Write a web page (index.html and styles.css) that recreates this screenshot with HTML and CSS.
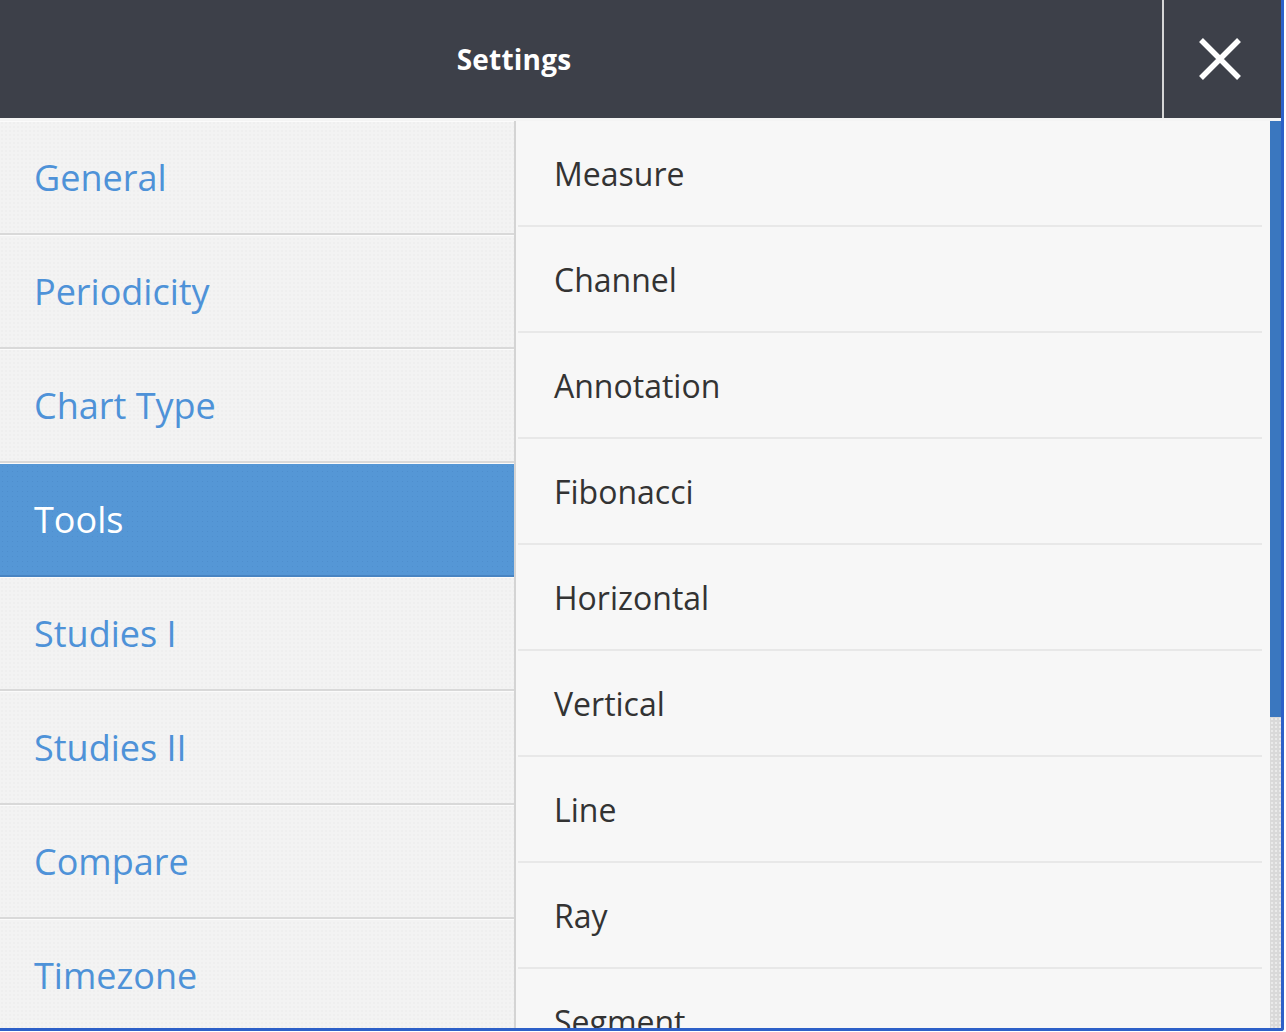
FILE: index.html
```html
<!DOCTYPE html>
<html lang="en">
<head>
<meta charset="utf-8">
<title>Settings</title>
<link rel="stylesheet" href="styles.css">
</head>
<body>
<div class="frame">
  <header class="header">
    <div class="title">Settings</div>
    <button class="close" aria-label="Close">
      <svg width="44" height="44" viewBox="0 0 44 44" aria-hidden="true">
        <path d="M3 3 L41 41 M41 3 L3 41" stroke="#fff" stroke-width="5.5" fill="none"/>
      </svg>
    </button>
  </header>
  <div class="body">
    <nav class="menu">
      <div class="menu-item">General</div>
      <div class="menu-item">Periodicity</div>
      <div class="menu-item">Chart Type</div>
      <div class="menu-item active">Tools</div>
      <div class="menu-item">Studies I</div>
      <div class="menu-item">Studies II</div>
      <div class="menu-item">Compare</div>
      <div class="menu-item">Timezone</div>
    </nav>
    <div class="pane">
      <div class="list">
        <div class="list-item">Measure</div>
        <div class="list-item">Channel</div>
        <div class="list-item">Annotation</div>
        <div class="list-item">Fibonacci</div>
        <div class="list-item">Horizontal</div>
        <div class="list-item">Vertical</div>
        <div class="list-item">Line</div>
        <div class="list-item">Ray</div>
        <div class="list-item">Segment</div>
        <div class="list-item">Rectangle</div>
        <div class="list-item">Ellipse</div>
        <div class="list-item">Pitchfork</div>
        <div class="list-item">Crossline</div>
      </div>
      <div class="scrollbar">
        <div class="thumb"></div>
      </div>
    </div>
  </div>
</div>
</body>
</html>
```
FILE: styles.css
```css
html, body {
  margin: 0;
  padding: 0;
  background: #ffffff;
}
body {
  font-family: "Open Sans", "Noto Sans", sans-serif;
  width: 1286px;
  height: 1032px;
  overflow: hidden;
}
.frame {
  width: 1281px;
  height: 1028px;
  border-right: 3px solid #2d60c8;
  border-bottom: 3px solid #2d60c8;
  border-bottom-right-radius: 3px;
  display: flex;
  flex-direction: column;
  overflow: hidden;
}
.header {
  height: 118px;
  flex: 0 0 118px;
  background: #3d4049;
  display: flex;
  align-items: stretch;
}
.title {
  flex: 1;
  display: flex;
  align-items: center;
  justify-content: center;
  padding-right: 134px;
  color: #ffffff;
  font-weight: 700;
  font-size: 28px;
  letter-spacing: 0.2px;
}
.close {
  width: 119px;
  flex: 0 0 119px;
  box-sizing: border-box;
  border: 0;
  border-left: 2px solid #d6d6d6;
  background: #3d4049;
  display: flex;
  align-items: center;
  justify-content: center;
  padding: 0 5px 0 0;
  margin: 0;
  cursor: pointer;
}
.body {
  flex: 1;
  min-height: 0;
  display: flex;
  border-top: 3px solid #f4f4f4;
}
.menu {
  width: 514px;
  flex: 0 0 514px;
  border-right: 2px solid #d4d4d4;
  background-color: #f3f3f3;
  background-image: radial-gradient(rgba(0,0,0,0.035) 0.6px, transparent 0.8px);
  background-size: 4px 4px;
  overflow: hidden;
}
.menu-item {
  height: 111px;
  border-top: 1px solid #fbfbfb;
  border-bottom: 2px solid #d9d9d9;
  display: flex;
  align-items: center;
  padding-left: 34px;
  font-size: 36px;
  color: #4e92d8;
}
.menu-item.active {
  background-color: #5597d6;
  background-image: radial-gradient(rgba(40,80,140,0.12) 0.6px, transparent 0.9px);
  background-size: 5px 5px;
  border-bottom-color: #4884c2;
  color: #ffffff;
}
.pane {
  flex: 1;
  min-width: 0;
  display: flex;
  background: #f7f7f7;
}
.list {
  flex: 1;
  overflow: hidden;
}
.list-item {
  height: 104px;
  margin-right: 8px;
  margin-left: 2px;
  border-bottom: 2px solid #e8e8e8;
  display: flex;
  align-items: center;
  padding-left: 36px;
  font-size: 32px;
  color: #333333;
}
.scrollbar {
  width: 11px;
  flex: 0 0 11px;
  background-color: #d9d9d9;
  background-image: radial-gradient(rgba(255,255,255,0.7) 0.6px, transparent 0.9px);
  background-size: 4px 4px;
}
.thumb {
  height: 596px;
  background: #3a77bf;
}
```
